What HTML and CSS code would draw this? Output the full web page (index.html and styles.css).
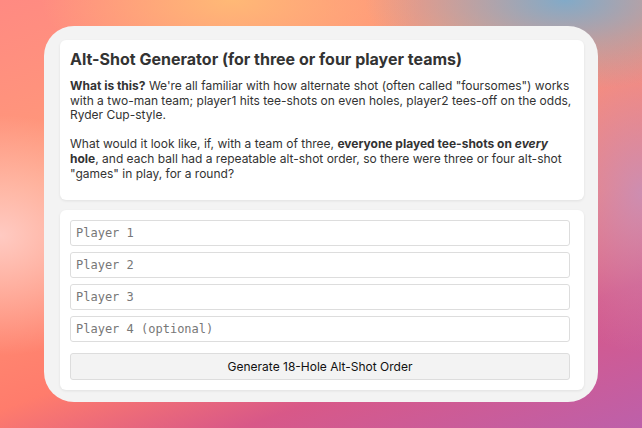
FILE: index.html
```html
<!DOCTYPE html>
<html lang="en">
<head>
  <meta charset="UTF-8" />
  <meta name="viewport" content="width=device-width, initial-scale=1" />
  <title>Alt-Shot Generator</title>
  <link rel="stylesheet" href="styles.css">
</head>
<body>
  <div class="window">
    <div class="card intro">
      <h2>Alt-Shot Generator (for three or four player teams)</h2>
      <p>
        <strong>What is this?</strong> We're all familiar with how alternate shot (often called "foursomes") works
        with a two-man team; player1 hits tee-shots on even holes, player2 tees-off on the odds, Ryder Cup-style.
        <br><br>
        What would it look like, if, with a team of three, <strong>everyone played tee-shots on <em>every</em>
        hole</strong>, and each ball had a repeatable alt-shot order, so there were three or four alt-shot
        "games" in play, for a round?
      </p>
    </div>

    <div class="card players">
      <input type="text" placeholder="Player 1" />
      <input type="text" placeholder="Player 2" />
      <input type="text" placeholder="Player 3" />
      <input type="text" placeholder="Player 4 (optional)" />
      <button>Generate 18-Hole Alt-Shot Order</button>
    </div>
  </div>
</body>
</html>
```

FILE: styles.css
```css
html, body {
  height: 100%;
  margin: 0;
  font-family: 'Inter', 'Liberation Sans', sans-serif;
  color: #333;
  overflow: hidden;
}

body {
  background:
    radial-gradient(ellipse 160px 120px at 0% 55%, rgba(255, 205, 198, 0.95), rgba(255, 205, 198, 0) 100%),
    radial-gradient(ellipse 200px 90px at 88% 0%, rgba(130, 170, 200, 1), rgba(130, 170, 200, 0) 100%),
    radial-gradient(ellipse 190px 80px at 36% 0%, rgba(255, 185, 118, 1), rgba(255, 185, 118, 0) 100%),
    radial-gradient(ellipse 120px 160px at 100% 45%, rgba(200, 144, 184, 0.9), rgba(200, 144, 184, 0) 100%),
    linear-gradient(160deg, #ff8a82 0%, #ff9a78 30%, #ff7c6c 62%, #d85888 78%, #bd60aa 100%);
  display: flex;
  justify-content: center;
  align-items: flex-start;
}

.window {
  margin-top: 26px;
  width: 554px;
  height: 376px;
  box-sizing: border-box;
  background: #f3f3f3;
  border-radius: 30px;
  padding: 14px 14px 0 16px;
  overflow: hidden;
  display: flex;
  flex-direction: column;
  gap: 10px;
}

.card {
  background: #fff;
  border-radius: 6px;
  box-shadow: 0 1px 3px rgba(0, 0, 0, 0.08);
  padding: 10px;
}

.intro h2 {
  margin: 0;
  font-size: 16px;
  line-height: 19px;
  font-weight: 700;
  color: #333;
}

.intro p {
  margin: 10px 0 9px;
  font-size: 12px;
  line-height: 14.6px;
}

.players {
  display: flex;
  flex-direction: column;
  gap: 6px;
  flex-shrink: 0;
  padding-right: 14px;
}

.players input {
  height: 26px;
  box-sizing: border-box;
  border: 1px solid #ddd;
  border-radius: 3px;
  padding: 0 5px;
  font-family: 'DejaVu Sans Mono', monospace;
  font-size: 12px;
  color: #222;
}

.players input::placeholder {
  color: #777;
}

.players button {
  margin-top: 5px;
  height: 27px;
  border: 1px solid #ddd;
  border-radius: 3px;
  background: #f3f3f3;
  font-family: 'Inter', 'Liberation Sans', sans-serif;
  font-size: 12px;
  color: #111;
  cursor: pointer;
}
```
